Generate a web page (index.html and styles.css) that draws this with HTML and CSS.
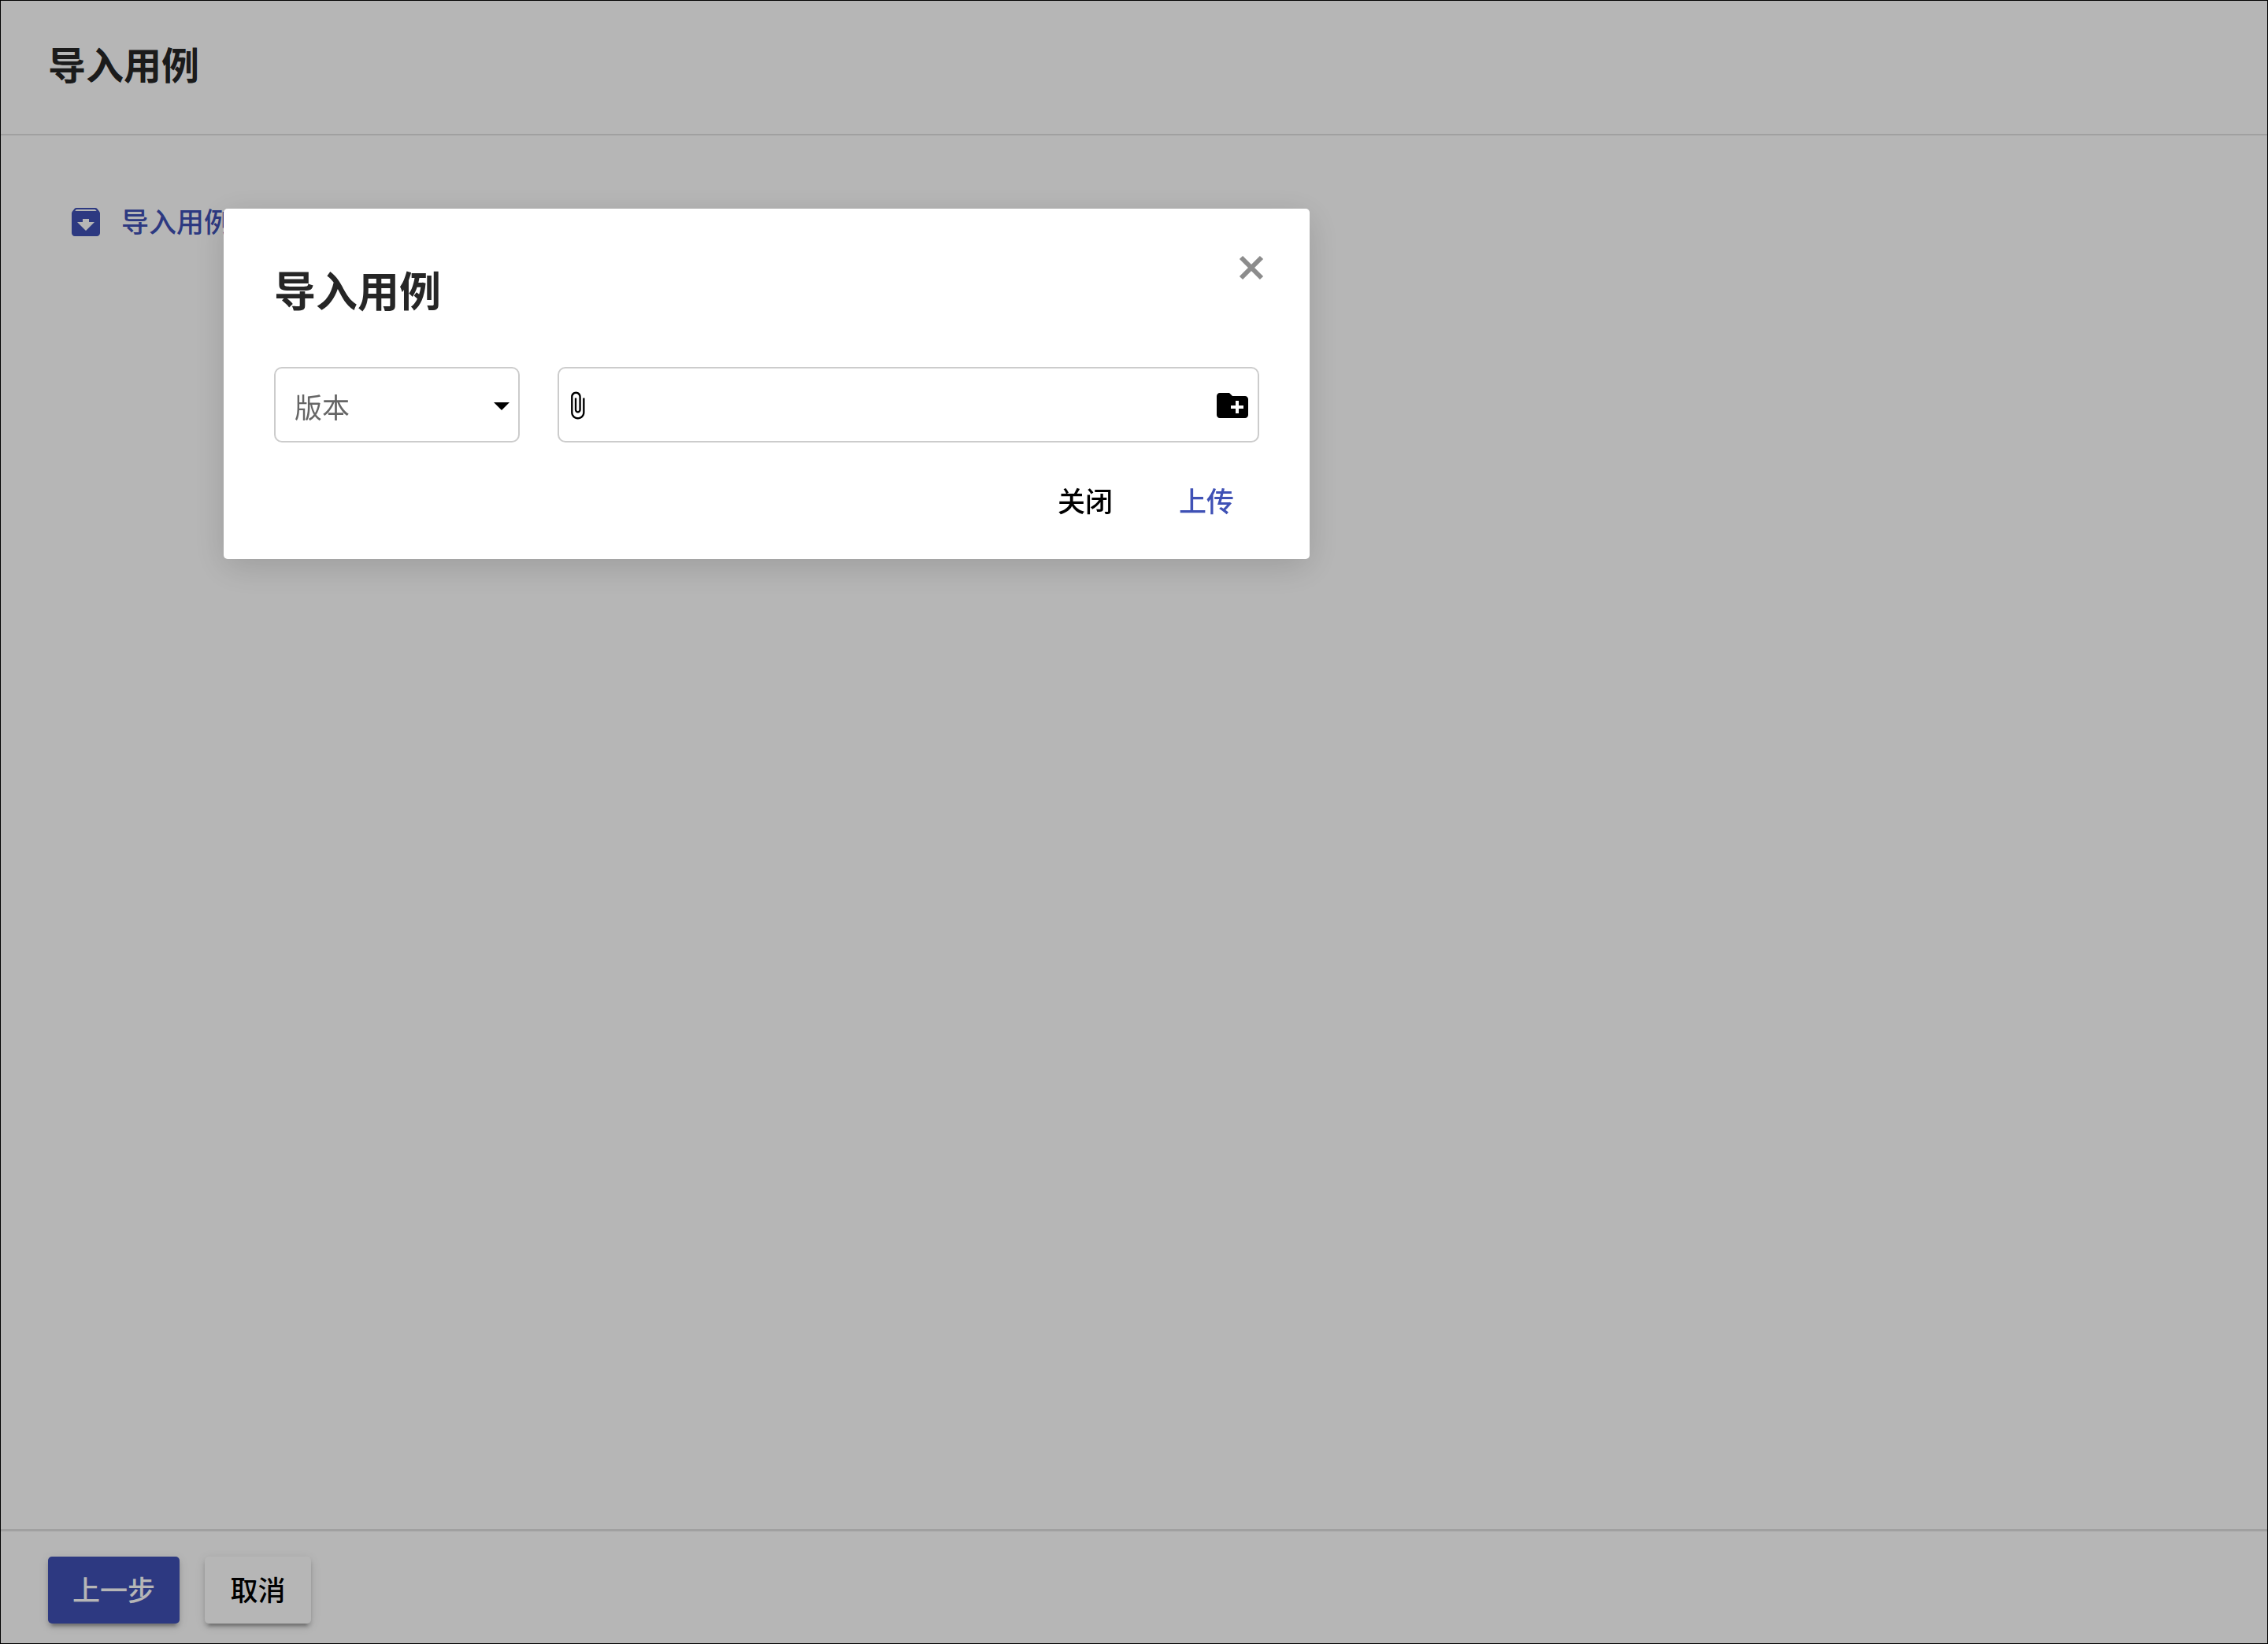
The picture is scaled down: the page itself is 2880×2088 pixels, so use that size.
FILE: index.html
```html
<!DOCTYPE html>
<html lang="zh-CN">
<head>
<meta charset="utf-8">
<meta name="viewport" content="width=device-width, initial-scale=1">
<title>导入用例</title>
<link rel="stylesheet" href="styles.css">
</head>
<body>
<div class="page">
  <header class="page-header">
    <h1 class="page-title">导入用例</h1>
  </header>
  <main class="page-main">
    <a class="import-link" href="#import">
      <svg class="icon" viewBox="0 0 24 24" aria-hidden="true"><path d="M20.54 5.23l-1.39-1.68C18.88 3.21 18.47 3 18 3H6c-.47 0-.88.21-1.16.55L3.46 5.23C3.17 5.57 3 6.02 3 6.5V19c0 1.1.9 2 2 2h14c1.1 0 2-.9 2-2V6.5c0-.48-.17-.93-.46-1.27zM12 17.5L6.5 12H10v-2h4v2h3.5L12 17.5zM5.12 5l.81-1h12l.94 1H5.12z"/></svg>
      <span class="import-label">导入用例</span>
    </a>
  </main>
  <footer class="page-footer">
    <button class="button button-raised button-primary" type="button">上一步</button>
    <button class="button button-raised" type="button">取消</button>
  </footer>
</div>
<div class="overlay">
  <section class="dialog" id="import" role="dialog" aria-modal="true" aria-labelledby="dialog-title">
    <div class="dialog-header">
      <h2 class="dialog-title" id="dialog-title">导入用例</h2>
      <button class="close" type="button" aria-label="关闭对话框">
        <svg class="icon" viewBox="0 0 48 48" aria-hidden="true"><path d="M11 11L37 37M37 11L11 37" fill="none" stroke="currentColor" stroke-width="6"/></svg>
      </button>
    </div>
    <form class="fields">
      <div class="field field-version">
        <select class="select" aria-label="版本">
          <option>版本</option>
        </select>
        <svg class="icon arrow" viewBox="0 0 24 24" aria-hidden="true"><path d="M7 10l5 5 5-5z"/></svg>
      </div>
      <div class="field field-file">
        <svg class="clip" viewBox="0 0 24 24" aria-hidden="true"><path d="M16.5 6v11.5c0 2.21-1.79 4-4 4s-4-1.79-4-4V5c0-1.38 1.12-2.5 2.5-2.5s2.5 1.12 2.5 2.5v10.5c0 .55-.45 1-1 1s-1-.45-1-1V6H10v9.5c0 1.38 1.12 2.5 2.5 2.5s2.5-1.12 2.5-2.5V5c0-2.21-1.79-4-4-4S7 2.79 7 5v12.5c0 3.04 2.46 5.5 5.5 5.5s5.5-2.46 5.5-5.5V6h-1.5z"/></svg>
        <input class="file-name" type="text" readonly aria-label="文件">
        <button class="browse" type="button" aria-label="选择文件">
          <svg class="icon" viewBox="0 0 24 24" aria-hidden="true"><path d="M20 6h-8l-2-2H4c-1.11 0-1.99.89-1.99 2L2 18c0 1.11.89 2 2 2h16c1.11 0 2-.89 2-2V8c0-1.11-.89-2-2-2zm-1 8h-3v3h-2v-3h-3v-2h3V9h2v3h3v2z"/></svg>
        </button>
      </div>
    </form>
    <div class="actions">
      <button class="button" type="button">关闭</button>
      <button class="button button-accent" type="button">上传</button>
    </div>
  </section>
</div>
</body>
</html>
```
FILE: styles.css
```css
* {
  box-sizing: border-box;
}

body {
  margin: 0;
  font-family: "Noto Sans CJK SC", "Noto Sans", sans-serif;
  font-size: 35px;
  line-height: 48px;
  color: #000;
  background: #fff;
}

button,
input,
select {
  margin: 0;
  border: 0;
  padding: 0;
  background: none;
  font: inherit;
  color: inherit;
}

h1,
h2 {
  margin: 0;
  font-weight: 700;
  color: #262626;
}

.icon {
  display: block;
  width: 48px;
  height: 48px;
  flex: none;
  fill: currentColor;
}

.page {
  display: flex;
  flex-direction: column;
  min-height: 100vh;
  border: 1px solid #000;
}

.page-header {
  padding: 47px 60px 58px;
  border-bottom: 2px solid #e1e1e1;
}

.page-title {
  font-size: 48px;
  line-height: 64px;
}

.page-main {
  flex: 1;
  padding: 86px 84px;
}

.import-link {
  display: inline-flex;
  align-items: center;
  gap: 21px;
  font-weight: 500;
  color: #3f51b5;
  text-decoration: none;
}

.import-label {
  padding-bottom: 4px;
  line-height: 44px;
}

.page-footer {
  display: flex;
  gap: 32px;
  padding: 32px 60px 25px;
  border-top: 3px solid #e1e1e1;
}

.button {
  height: 84px;
  padding: 0 32px 2px;
  border-radius: 5px;
  font-weight: 500;
}

.button-raised {
  height: 85px;
  min-width: 135px;
  padding: 0 31px 4px;
  background: #fff;
  box-shadow: 0 8px 3px -5px rgba(0, 0, 0, .2), 0 5px 5px rgba(0, 0, 0, .14), 0 3px 13px rgba(0, 0, 0, .12);
}

.button-primary {
  background: #3f51b5;
  color: #fff;
}

.button-accent {
  color: #3f51b5;
}

.overlay {
  position: fixed;
  inset: 0;
  padding: 265px 0 0 284px;
  background: rgba(0, 0, 0, .287);
}

.dialog {
  width: 1379px;
  max-width: 100%;
  padding: 48px 64px 32px;
  border-radius: 5px;
  background: #fff;
  box-shadow: 0 10px 44px rgba(0, 0, 0, .15);
}

.dialog-header {
  display: flex;
  align-items: flex-start;
  justify-content: space-between;
  padding-bottom: 63px;
}

.dialog-title {
  padding-top: 18px;
  font-size: 53px;
  line-height: 72px;
}

.close {
  margin: 3px -14px 0 0;
  color: #8c8c8c;
}

.fields {
  display: flex;
  gap: 48px;
}

.field {
  display: flex;
  align-items: center;
  height: 96px;
  border: 2px solid #ccc;
  border-radius: 10px;
  padding-top: 2px;
}

.field-version {
  position: relative;
  width: 312px;
}

.select {
  width: 100%;
  height: 100%;
  padding: 2px 64px 0 24px;
  appearance: none;
  color: #666;
}

.arrow {
  position: absolute;
  right: -3px;
  pointer-events: none;
}

.field-file {
  flex: 1;
  padding: 2px 8px 0 4px;
}

.clip {
  width: 38px;
  height: 38px;
  flex: none;
}

.file-name {
  flex: 1;
  min-width: 0;
  height: 100%;
}

.actions {
  display: flex;
  justify-content: flex-end;
  gap: 20px;
  padding-top: 32px;
}
```
